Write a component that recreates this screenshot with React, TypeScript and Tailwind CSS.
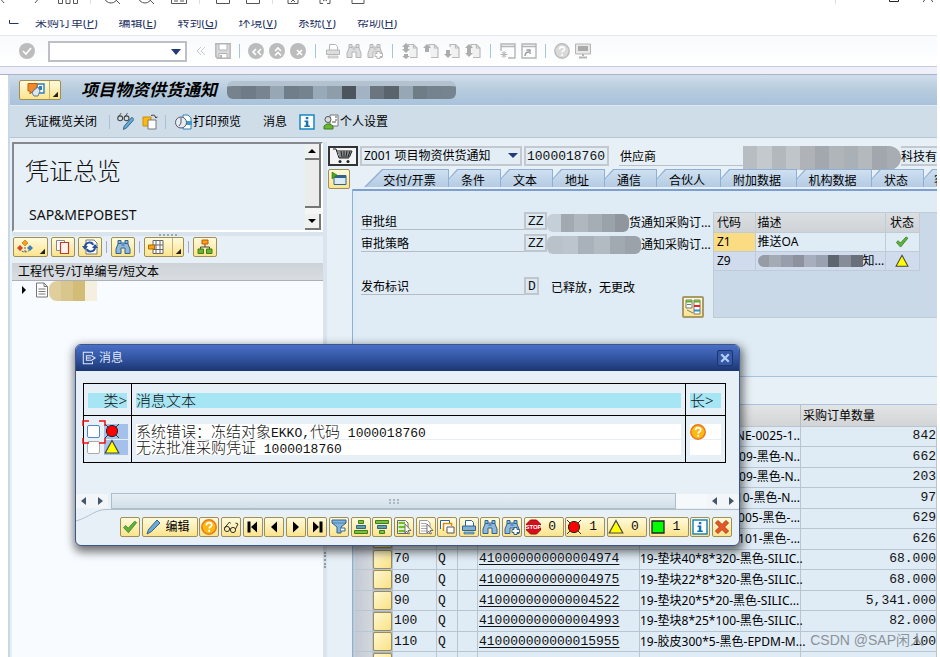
import React from "react";
import { clsx } from "clsx";

const MONO = "font-['Liberation_Mono','Noto_Sans_CJK_SC',monospace] text-[13px]";

const Svg = ({ children, className = "size-4", box = "0 0 16 16" }: { children: React.ReactNode, className?: string, box?: string }) => (
  <svg viewBox={box} className={clsx("shrink-0", className)} fill="none" aria-hidden="true">{children}</svg>
);

/* ---------- icons ---------- */

const Binoculars = ({ fill = "#8fb8dc", stroke = "#2f6391", plus = false }: { fill?: string, stroke?: string, plus?: boolean }) => (
  <Svg>
    <path d="M3 1.500h3v2.500h4V1.500h3V5l2 5v4.500h-5V9H6v5.500H1V10l2-5z" fill={fill} stroke={stroke} />
    <path d="M3 4.500h3M10 4.500h3M6.500 6h3" stroke={stroke} />
    {plus && <path d="M10 8.500h3v2h2.500v3H13v2h-3v-2H8v-3h2z" fill="#fff" stroke={stroke} />}
  </Svg>
);

const Question = () => (
  <Svg>
    <circle cx="8" cy="8" r="7.200" fill="#fdb913" stroke="#e8781e" strokeWidth="1.500" />
    <path d="M5.500 6.300c0-3.600 5.200-3.300 5.200-.4 0 1.800-2.500 1.700-2.500 3.600M8.200 10.800v1.900" stroke="#fff" strokeWidth="1.800" />
  </Svg>
);

const RedLight = () => (
  <Svg>
    <path d="M1 1l14 14M15 1L1 15" stroke="#333" />
    <circle cx="8" cy="8" r="5.600" fill="#f00" stroke="#222" />
  </Svg>
);

const Triangle = () => (
  <Svg><path d="M8 1.500l6.800 12.500H1.200z" fill="#ff0" stroke="#444" strokeWidth="1.200" /></Svg>
);

const Check = () => (
  <Svg><path d="M1.500 8.500l2.200-2 2.500 2.700 6.500-7 2 1.400-8.300 10.200z" fill="#5fb336" stroke="#3f8226" strokeWidth=".8" /></Svg>
);

const Info = ({ className = "size-4" }: { className?: string }) => (
  <Svg className={className}>
    <path d="M1 1h14v14H1z" fill="#fff" stroke="#1787c4" strokeWidth="1.500" />
    <path d="M6.800 3h2.500v2.200H6.800zM5.500 6.500h3.800v5h1.500V13H5.300v-1.500h1.500V8H5.500z" fill="#1573ad" />
  </Svg>
);

const Printer = ({ fill = "#7fb0d3", stroke = "#2f6391" }: { fill?: string, stroke?: string }) => (
  <Svg>
    <path d="M4.500 7V1.500h6l2 2V7" fill="#fff" stroke={stroke} />
    <path d="M1.500 7h13v4.500h-13z" fill={fill} stroke={stroke} />
    <path d="M3 13h10v2H3z" fill={fill} stroke={stroke} strokeWidth=".6" />
  </Svg>
);

const Glasses = () => (
  <Svg>
    <circle cx="4" cy="10" r="2.600" stroke="#333" />
    <circle cx="10" cy="11" r="2.600" stroke="#333" />
    <path d="M6.300 9.500l1.500.5M1.500 9l5-6 1 1.500M12.500 10l2.500-5-2.500-1" stroke="#333" />
  </Svg>
);

const GrayCircle = ({ d }: { d: string }) => (
  <Svg>
    <circle cx="8" cy="8" r="8" fill="#bcbcbc" />
    <path d={d} stroke="#fff" strokeWidth="1.600" />
  </Svg>
);

const GrayPage = ({ arrow }: { arrow: string }) => (
  <Svg>
    <path d="M6 4V1.500h5.500l3.500 3.500v9.500H8M11.500 1.500V5H15" fill="#f1f1f1" stroke="#b9b9b9" strokeWidth="1.200" />
    <path d={arrow} fill="#adadad" />
  </Svg>
);

const PlayerMark = ({ d }: { d: string }) => <Svg><path d={d} fill="#000" /></Svg>;

const ListMark = ({ green = false }: { green?: boolean }) => (
  <Svg>
    <path d="M1.500 1.500h8l2.500 2.500v10.500H1.500z" fill="#fff" stroke={green ? "#667" : "#999"} />
    {green
      ? <path d="M2.500 4h6.500M2.500 8h7M2.500 12h7" stroke="#6fbf1f" strokeWidth="2.500" />
      : <path d="M3 4.500h5.500M3 7h6.500M3 9.500h6M3 12h6" stroke="#aaa" />}
    <path d="M9 5l6 6.500h-3l1.500 3-1.500.5-1.300-3L9 14z" fill="#fff" stroke="#555" strokeWidth=".8" />
  </Svg>
);

/* ---------- small parts ---------- */

const Separator = ({ className = "mx-[9px]" }: { className?: string }) => (
  <span className={clsx("h-3.5 w-px shrink-0 bg-[#a9c3da]", className)} />
);

const YellowButton = ({ label, children, className = "w-6", menu = false }: { label: string, children: React.ReactNode, className?: string, menu?: boolean }) => (
  <button
    aria-label={label}
    className={clsx(
      "relative flex h-5 shrink-0 items-center justify-center gap-1 rounded-[2px] border border-[#a08f55] bg-linear-to-b from-[#fffadb] to-[#fbe48c]",
      className,
    )}
  >
    {children}
    {menu && <Svg className="absolute right-0.5 bottom-0.5 size-1.5"><path d="M16 2v14H2z" fill="#222" /></Svg>}
  </button>
);

const Mosaic = ({ cells, className }: { cells: string[], className: string }) => (
  <span className={clsx("flex shrink-0 overflow-hidden", className)}>
    {cells.map((cell, i) => <span key={i} className={clsx("flex-1", cell)} />)}
  </span>
);

/* ---------- top of the window ---------- */

const BrowserStrip = () => (
  <div className="flex h-5 items-start overflow-hidden text-[#555]">
    <Svg className="-mt-3 h-4 w-1.5" box="0 0 6 16"><path d="M-2 8l6 7M-2 8l6-7" stroke="currentColor" /></Svg>
    <Svg className="-mt-3 ml-7 h-4 w-2" box="0 0 8 16"><path d="M1 15l6-7-6-7" stroke="currentColor" /></Svg>
    <Svg className="-mt-3 ml-4 h-4 w-5" box="0 0 20 16"><path d="M.5 0v15.500h4V0M8 0v15.500h4V0M15.500 0v15.500h4V0" stroke="currentColor" /></Svg>
    <span className="ml-3 h-1 w-px bg-[#ddd]" />
    <Svg className="-mt-3 ml-3 h-4 w-4.5" box="0 0 18 16"><circle cx="8" cy="8" r="7" stroke="currentColor" /><path d="M13 12l4 4" stroke="currentColor" /></Svg>
    <Svg className="-mt-3 ml-4 h-4 w-4.5" box="0 0 18 16"><circle cx="8" cy="8" r="7" stroke="currentColor" /><path d="M13 12l4 4" stroke="currentColor" /></Svg>
    <Svg className="-mt-3 ml-4 size-4"><path d="M.5 0v15.500h15V0M3 13h4M9 13h4" stroke="currentColor" /></Svg>
    <span className="ml-3 h-1 w-px bg-[#ddd]" />
    <Svg className="-mt-3 ml-4 h-4 w-3.5" box="0 0 14 16"><path d="M.5 0v15.500h13V0" stroke="currentColor" /></Svg>
    <Svg className="-mt-3 ml-4 h-4 w-3.5" box="0 0 14 16"><path d="M.5 0v15.500h13V0M0 11.500h14" stroke="currentColor" /></Svg>
    <span className="ml-3 h-1 w-px bg-[#ddd]" />
    <Svg className="-mt-3 ml-3.5 h-4 w-3" box="0 0 12 16"><path d="M1 0v15.500h10V0M4 14l4-4M8 14l-4-4" stroke="currentColor" /></Svg>
    <Svg className="-mt-3 ml-5 h-4 w-3" box="0 0 12 16"><path d="M1 9v6.500h3M11 9v6.500H8M4 13l4-3M8 13l-4-3" stroke="currentColor" /></Svg>
    <Svg className="-mt-3 ml-5 h-4 w-3.5" box="0 0 14 16"><path d="M1 0v15.500h12V0" stroke="currentColor" /></Svg>
    <span className="ml-auto h-1 w-px bg-[#ddd]" />
    <Svg className="-mt-3.5 ml-[53px] h-4 w-2.5" box="0 0 10 16"><path d="M.5 0v15.500h9V0" stroke="#222" /></Svg>
    <Svg className="-mt-3.5 mr-1 ml-6 h-4 w-2.5" box="0 0 10 16"><path d="M0 16l5-6 5 6" stroke="#444" /></Svg>
  </div>
);

const menus = [
  { label: "采购订单", k: "P" },
  { label: "编辑", k: "E" },
  { label: "转到", k: "G" },
  { label: "环境", k: "V" },
  { label: "系统", k: "Y" },
  { label: "帮助", k: "H" },
];

const MenuBar = () => (
  <nav className="flex h-4 items-start overflow-hidden border-b border-[#e3e8ee] pl-[9px] text-[#1f3566]">
    <Svg className="-mt-[11px] mr-4 h-4 w-2.5" box="0 0 10 16"><path d="M.5 0v14.500h9" stroke="#1f3566" /></Svg>
    <div className="-mt-[5px] flex gap-[21px] leading-4">
      {menus.map((m) => (
        <button key={m.k} className="whitespace-nowrap">{m.label}(<u>{m.k}</u>)</button>
      ))}
    </div>
  </nav>
);

const CommandBar = () => (
  <div className="flex h-[31px] items-center border-b border-[#c5cddd] bg-linear-to-b from-[#f8fafc] to-white pl-[19px]">
    <button aria-label="确认"><GrayCircle d="M4 8l3 3 5-6" /></button>
    <div className="relative ml-[13px] flex w-[139px]">
      <input aria-label="命令" className="h-[21px] w-full border-2 border-[#bcbfc6] bg-white px-1" />
      <Svg className="absolute top-2 right-1.5 h-1.5 w-2.5" box="0 0 10 6"><path d="M0 0h10L5 6z" fill="#24397a" /></Svg>
    </div>
    <Svg className="ml-[9px] h-3 w-2.5" box="0 0 10 12"><path d="M5 2L1 6l4 4M9 2L5 6l4 4" stroke="#ccc" /></Svg>
    <Svg className="ml-[9px] size-4">
      <path d="M.8.800h14.400v14.400H2.500L.8 13.500z" fill="#d9d9d9" stroke="#b5b5b5" strokeWidth="1.400" />
      <path d="M4 1h8v6H4zM4 10.500h8V15H4z" fill="#fff" stroke="#b5b5b5" />
      <path d="M6 12v3" stroke="#b5b5b5" strokeWidth="2" />
    </Svg>
    <Separator className="mx-2" />
    <div className="flex gap-[5px]">
      <GrayCircle d="M8 6l-3 3 3 3M13 6l-3 3 3 3" />
      <GrayCircle d="M6 8l3-3 3 3M6 12.500l3-3 3 3" />
      <GrayCircle d="M7 7l5 5M12 7l-5 5" />
    </div>
    <Separator />
    <div className="flex gap-[5px]">
      <Printer fill="#ddd" stroke="#b5b5b5" />
      <Binoculars fill="#ddd" stroke="#b5b5b5" />
      <Binoculars fill="#ddd" stroke="#b5b5b5" plus />
    </div>
    <Separator />
    <div className="flex gap-[5px]">
      <GrayPage arrow="M4 0l4 4H6v2h2L4 10 0 6h2V4H0zM2 11h4v2h2l-4 3-4-3h2z" />
      <GrayPage arrow="M4 1l4 4H6v4H2V5H0z" />
      <GrayPage arrow="M2 7h4v4h2l-4 4-4-4h2z" />
      <GrayPage arrow="M4 1l4 4H6v5h2l-4 4-4-4h2V5H0z" />
    </div>
    <Separator />
    <div className="flex gap-[5px]">
      <Svg><path d="M1 8V1h14v14H8M1 3.500h14" stroke="#b5b5b5" strokeWidth="1.400" /><path d="M4 8v7M.5 11.500h7M2 9l4 5M6 9l-4 5" stroke="#b5b5b5" /></Svg>
      <Svg><path d="M1 1h14v14H1zM1 3.500h14" stroke="#b5b5b5" strokeWidth="1.400" /><path d="M4 13c0-3 1-4 4-4M5.500 7H9v4" stroke="#999" strokeWidth="1.400" /></Svg>
    </div>
    <Separator className="mx-2" />
    <div className="flex gap-[5px]">
      <Svg><circle cx="8" cy="8" r="7.200" fill="#dadada" stroke="#bbb" strokeWidth="1.400" /><path d="M5.500 6.500c0-3.500 5-3.300 5-.3C10.500 8 8 7.800 8 9.500M8 11v2" stroke="#fff" strokeWidth="1.600" /></Svg>
      <Svg><path d="M.5 1h15v10H.5z" fill="#e8e8e8" stroke="#b5b5b5" /><path d="M3 3h10v5H3z" fill="#aaa" /><path d="M8 11v2M4 14.500h8" stroke="#b5b5b5" strokeWidth="2" /></Svg>
    </div>
  </div>
);

const titleCells = [
  "bg-[#76838f]", "bg-[#6f7c88]", "bg-[#78848f]", "bg-[#98a7b4]", "bg-[#707e89]", "bg-[#75838e]", "bg-[#98a9b7]", "bg-[#8e9daa]",
  "bg-[#4c555d]", "bg-[#a3b3c3]", "bg-[#6b7580]", "bg-[#5a646d]", "bg-[#98a7b6]", "bg-[#6f7d87]", "bg-[#75838e]", "bg-[#76848f]",
];

const TitleBar = () => (
  <header className="flex h-[31px] items-center border-b border-[#dde8f1] bg-linear-to-b from-[#cfdeec] via-[#b6cbdc] to-[#a9c2dc] pl-[9px]">
    <YellowButton label="服务" className="w-[42px]" menu>
      <Svg className="mr-2 h-4 w-[18px]" box="0 0 18 16">
        <path d="M10 2h7v9h-7z" fill="#fff" stroke="#2d7fb8" strokeWidth="1.400" />
        <path d="M12 4h3v4h-3z" fill="#2d7fb8" />
        <path d="M1 1.500h9v3L6 9l-3 3V9H1z" fill="#f08a2a" stroke="#c05e10" />
        <path d="M7 8l4-3 2 4-2 5H7l-2-3z" fill="#dbe8f2" stroke="#5b7b95" />
      </Svg>
      <span className="absolute inset-y-0 right-2.5 w-px bg-[#c4b57a]" />
    </YellowButton>
    <h1 className="ml-5 text-[17px] leading-5 font-bold whitespace-nowrap text-black italic">项目物资供货通知</h1>
    <Mosaic className="ml-2.5 h-[18px] w-[229px] rounded-md border-t-[5px] border-[#b4c1cf]" cells={titleCells} />
  </header>
);

const AppToolbar = () => (
  <div className="flex h-8 items-center border-b border-[#b7c6d3] bg-[#cfdde8] pl-[15px] text-black">
    <button className="whitespace-nowrap">凭证概览关闭</button>
    <Separator className="mr-[7px] ml-3" />
    <button aria-label="显示/更改" className="flex">
      <Svg className="size-[17px]">
        <circle cx="3" cy="5" r="2.300" stroke="#444" /><circle cx="9" cy="5" r="2.300" stroke="#444" />
        <path d="M1 4l3-4M7 4l3-4" stroke="#444" strokeWidth=".8" />
        <path d="M14 4l2 2-7 8-3 1.500.7-3z" fill="#6aa8d4" stroke="#205a86" strokeWidth=".8" />
      </Svg>
    </button>
    <button aria-label="其他采购订单" className="ml-2 flex">
      <Svg><path d="M1 3h8v9H1z" fill="#fcb813" stroke="#d18d00" /><path d="M6 6h8v9H6z" fill="#fff" stroke="#777" /><path d="M9 1.500c3-1 5 0 5 2.500l1.500-1M14 4l-1.500-1.500" stroke="#444" /></Svg>
    </button>
    <Separator className="mr-[9px] ml-[7px]" />
    <button className="flex items-center whitespace-nowrap">
      <Svg className="h-4 w-[18px]" box="0 0 18 16">
        <path d="M8 1h5l3 3v11H8z" fill="#fff" stroke="#2d7fb8" />
        <path d="M11 7h6v4h-6z" fill="#3c9ccf" />
        <circle cx="6" cy="8.500" r="5.500" fill="#e4edf4" stroke="#556" />
        <path d="M6 4v5l-2 3" stroke="#556" />
      </Svg>
      打印预览
    </button>
    <button className="ml-[22px] whitespace-nowrap">消息</button>
    <button aria-label="帮助" className="ml-3 flex"><Info /></button>
    <button className="ml-2 flex items-center whitespace-nowrap">
      <Svg className="mr-px size-4">
        <path d="M7 1h8v11H7z" fill="#fff" stroke="#777" /><path d="M12 3h2M12 6h2M9 8h4" stroke="#555" />
        <circle cx="5" cy="5.500" r="3" fill="#ddd" stroke="#555" />
        <path d="M1 15v-3l3-2h3l3 2v3z" fill="#6cb52d" stroke="#3f7d1d" />
      </Svg>
      个人设置
    </button>
  </div>
);

/* ---------- left side ---------- */

const Overview = () => (
  <aside className="flex w-[311px] shrink-0 flex-col">
    <div className="flex h-[90px] border-2 border-[#868a8f] border-r-white border-b-white">
      <div className="flex-1 overflow-hidden pt-[11px] pl-[11px] text-[#111]">
        <h2 className="text-[24px] leading-8 font-light">凭证总览</h2>
        <p className="mt-5 pl-1 text-[14px] leading-4">SAP&amp;MEPOBEST</p>
      </div>
      <div className="flex w-4 flex-col bg-[#f6f6f6]">
        <button aria-label="向上" className="flex h-4 items-center justify-center border-r-2 border-b-2 border-[#777] bg-[#f0f0f0]"><Svg className="h-1 w-2" box="0 0 8 4"><path d="M4 0l4 4H0z" fill="#000" /></Svg></button>
        <span className="flex-1 border-r-2 border-b-2 border-[#777] bg-[#ececec]" />
        <button aria-label="向下" className="mt-1.5 flex h-4 items-center justify-center border-r-2 border-b-2 border-[#777] bg-[#f0f0f0]"><Svg className="h-1 w-2" box="0 0 8 4"><path d="M0 0h8L4 4z" fill="#000" /></Svg></button>
      </div>
    </div>
    <div className="flex h-1 items-end justify-center bg-[#d9e4ec]"><span className="w-[18px] border-b-2 border-dotted border-[#9aa8b4]" /></div>
    <div className="flex h-[22px] items-center gap-[3px] pl-px">
      <YellowButton label="选择变式" className="w-[35px] pr-3" menu>
        <Svg>
          <path d="M3 10c1 4 9 4 10 0M8 8v6" stroke="#567" strokeDasharray="2 1" />
          <path d="M8 1l3 3-3 3-3-3z" fill="#f9a11b" stroke="#b46b00" strokeWidth=".6" />
          <path d="M3 6l3 3-3 3-3-3z" fill="#d8452c" /><path d="M13 6l3 3-3 3-3-3z" fill="#3b80bd" />
        </Svg>
      </YellowButton>
      <YellowButton label="复制"><Svg><path d="M1.500 1.500h8v10h-8z" fill="#fff" stroke="#888" /><path d="M5.500 3.500h8v11h-8z" fill="#fff3ee" stroke="#c0392b" strokeWidth="1.200" /></Svg></YellowButton>
      <YellowButton label="刷新">
        <Svg><path d="M4 1h8l3 3v11H4z" fill="#fff" stroke="#777" /><path d="M3 8c0-5 7-6 8-2M13 8c0 5-7 6-8 2" stroke="#2350a0" strokeWidth="2" /><path d="M0 7h6L3 11zM10 9h6l-3-4z" fill="#2350a0" /></Svg>
      </YellowButton>
      <span className="mx-px h-3 w-px bg-[#aab]" />
      <YellowButton label="查找"><Binoculars /></YellowButton>
      <span className="mx-px h-3 w-px bg-[#aab]" />
      <YellowButton label="布局" className="w-10 pr-4" menu>
        <Svg><path d="M5 1.500h10v13H5zM8 1v14M12 1v14M5 6h10M5 10.500h10" fill="#fff" stroke="#666" /><path d="M.5 6h6v4h-6z" fill="#fca311" stroke="#b46b00" /></Svg>
        <span className="absolute inset-y-0 right-2.5 w-px bg-[#c4b57a]" />
      </YellowButton>
      <span className="mx-px h-3 w-px bg-[#aab]" />
      <YellowButton label="层次">
        <Svg><path d="M8 5v3M3.500 10V8h9v2" stroke="#444" /><path d="M5 1h6v4H5z" fill="#fca311" stroke="#c0551b" /><path d="M1 10h5.500v4.500H1zM9.500 10H15v4.500H9.500z" fill="#69b32d" stroke="#3f7d1d" /></Svg>
      </YellowButton>
    </div>
    <div className="mt-[5px] h-[18px] border-b border-[#a9b0b6] bg-linear-to-b from-[#cdd3d8] to-[#d9dde1] pl-1.5 leading-[18px] text-black">工程代号/订单编号/短文本</div>
    <div className="flex flex-1 items-start bg-[#f8fbff]">
      <button aria-label="展开" className="mt-[5px] ml-2.5"><Svg className="h-2 w-1" box="0 0 4 8"><path d="M0 0l4 4-4 4z" fill="#000" /></Svg></button>
      <Svg className="mt-px ml-2.5 h-4 w-3" box="0 0 12 16"><path d="M.5 1h7.500l3.500 3.500V15H.5zM8 1v3.500h3.500M2.500 7h7M2.500 9.500h7M2.500 12h7" fill="#fff" stroke="#777" /></Svg>
      <Mosaic className="ml-px h-5 w-12 rounded-l-lg" cells={["bg-[#e0cf9c]", "bg-[#d9c68c]", "bg-[#d3bc76]", "bg-[#f4efdf]"]} />
    </div>
  </aside>
);

/* ---------- right side ---------- */

const tabs = [
  { label: "交付/开票", width: "w-[85px] pl-1.5" },
  { label: "条件", width: "w-[52px] pr-1" },
  { label: "文本", width: "w-[52px] pr-1" },
  { label: "地址", width: "w-[52px] pr-1" },
  { label: "通信", width: "w-[52px] pr-1" },
  { label: "合伙人", width: "w-[64px] pr-1" },
  { label: "附加数据", width: "w-[76px] pr-1" },
  { label: "机构数据", width: "w-[75px] pr-1" },
  { label: "状态", width: "w-[52px] pr-1" },
  { label: "客户数据", width: "w-[76px] pl-2.5 text-left" },
];

const Tabs = () => (
  <div role="tablist" className="flex h-[18px] flex-1 overflow-hidden pl-3">
    {tabs.map((tab, i) => (
      <button
        key={tab.label}
        role="tab"
        className={clsx(
          "relative shrink-0 bg-[#8fb0d6] whitespace-nowrap text-black",
          i === 0 ? "[clip-path:polygon(0_100%,18px_0,100%_0,100%_100%)]" : "[clip-path:polygon(0_50%,8px_0,100%_0,100%_100%,0_100%)]",
          tab.width,
        )}
      >
        <span
          className={clsx(
            "absolute inset-0 mt-px mr-px bg-linear-to-b from-[#cfe0f0] to-[#b4cbe3]",
            i === 0 ? "[clip-path:polygon(2px_100%,19px_0,100%_0,100%_100%)]" : "[clip-path:polygon(0_55%,9px_0,100%_0,100%_100%,0_100%)]",
          )}
        />
        <span className="relative block pt-1 leading-4">{tab.label}</span>
      </button>
    ))}
  </div>
);

const DocumentHeader = () => (
  <div className="flex pt-1">
    <button aria-label="采购订单" className="flex h-5 w-[30px] items-center justify-center border-2 border-[#333] bg-[#f2f4f6]">
      <Svg className="h-4 w-5" box="0 0 20 16"><path d="M0 1h3l3 9h10M3.500 3H19l-2.500 6H6M5 5h13M6 7h11M8 3l1 6M11 3v6M14 3l-1 6M17 3l-2 6" stroke="#222" /><circle cx="7" cy="13.500" r="1.500" fill="#222" /><circle cx="15" cy="13.500" r="1.500" fill="#222" /></Svg>
    </button>
    <div className="relative ml-0.5 flex w-[162px]">
      <select aria-label="订单类型" className="h-5 w-full appearance-none border-2 border-[#c3c9cf] bg-[#e3edf5] pl-0.5 text-black">
        <option>Z001 项目物资供货通知</option>
      </select>
      <Svg className="pointer-events-none absolute top-[7px] right-1 h-[5px] w-2.5" box="0 0 10 5"><path d="M0 0h10L5 5z" fill="#24397a" /></Svg>
    </div>
    <input aria-label="凭证编号" readOnly value="1000018760" className={clsx(MONO, "ml-0.5 h-5 w-[85px] border-2 border-[#c3c9cf] bg-[#e3edf5] px-px text-[#111]")} />
    <label htmlFor="vendor" className="ml-2.5 h-5 w-[124px] border-b border-[#b9c1c8] pl-px leading-[22px] text-black">供应商</label>
    <Mosaic
      className="h-6 w-[158px] rounded-r-xl -mb-1"
      cells={["bg-[#b7bdc3]", "bg-[#c4c9cd]", "bg-[#b3b8bd]", "bg-[#c0c5ca]", "bg-[#afb2b6]", "bg-[#a2a8ae]", "bg-[#b0b5ba]", "bg-[#a9b0b6]", "bg-[#b4b9be]", "bg-[#a1a7ad]", "bg-[#a8adb3]"]}
    />
    <input id="vendor" readOnly value="科技有限公司" className="h-5 min-w-0 flex-1 border-y-2 border-[#c3c9cf] bg-[#e3edf5] text-black" />
  </div>
);

const ReleaseRow = ({ label, code, cells, width, text }: { label: string, code: string, cells?: string[], width?: string, text: string }) => (
  <div className="flex h-[18px] text-black">
    <span className="w-[163px] shrink-0 border-b border-[#b5bcc3] leading-5">{label}</span>
    <span className={clsx(MONO, "shrink-0 border-2 border-[#c0c6cc] bg-[#dce8f2] px-0.5 leading-4 text-[#111]", cells ? "w-[23px]" : "w-[15px]")}>{code}</span>
    {cells && <Mosaic className={clsx("mt-0.5 h-[18px] rounded-md", width)} cells={cells} />}
    <span className={clsx("leading-[22px] whitespace-nowrap", !cells && "ml-3")}>{text}</span>
  </div>
);

const ReleasePanel = () => (
  <div className="flex h-[187px] border-t-2 border-[#7c9fce] bg-[#dfebf5] pt-[21px] pl-2">
    <div className="flex w-[352px] shrink-0 flex-col">
      <ReleaseRow label="审批组" code="ZZ" width="w-[82px]" cells={["bg-[#c5cfd8]", "bg-[#a3a9b0]", "bg-[#b0b7be]", "bg-[#a5adb5]", "bg-[#9aa2aa]", "bg-[#8f969d]"]} text="货通知采购订..." />
      <div className="h-1" />
      <ReleaseRow label="审批策略" code="ZZ" width="w-[94px]" cells={["bg-[#b9c2cb]", "bg-[#bcc5cd]", "bg-[#a9b2ba]", "bg-[#b2bac2]", "bg-[#a1a9b1]", "bg-[#9ba2a9]"]} text="通知采购订..." />
      <div className="h-[25px]" />
      <ReleaseRow label="发布标识" code="D" text="已释放，无更改" />
      <button aria-label="释放策略" className="mt-px mr-[9px] flex size-[22px] items-center justify-center self-end rounded-[2px] border-2 border-[#a79a66] bg-linear-to-b from-[#fffadb] to-[#fbe48c]">
        <Svg><path d="M1 1h6v8H1zM9 1h6v14H9z" fill="#fff" stroke="#777" /><path d="M1 2.500h6M9 2.500h6" stroke="#5fae1b" strokeWidth="2" /><path d="M9 7h6" stroke="#e22" strokeWidth="2" /><path d="M9 11.500h6" stroke="#2c8fd0" strokeWidth="2" /><path d="M2 5.500h4M2 11l6 3" stroke="#777" /></Svg>
      </button>
    </div>
    <div className="h-[106px] flex-1 border border-r-0 border-[#bfcbd6] bg-[#c9d9e8]">
      <table className="table-fixed border-collapse text-left text-black">
        <thead className="h-[19px] bg-linear-to-b from-[#dcdfe1] to-[#cfd3d7]">
          <tr>
            <th className="w-[41px] border border-t-0 border-l-0 border-[#bfcbd6] pt-0.5 pl-[3px] font-normal">代码</th>
            <th className="w-[130px] border border-t-0 border-[#bfcbd6] pt-0.5 pl-0.5 font-normal">描述</th>
            <th className="w-[34px] border border-t-0 border-[#bfcbd6] pt-0.5 text-center font-normal">状态</th>
          </tr>
        </thead>
        <tbody>
          <tr className="h-[19px] bg-[#dfebf5]">
            <td className="border border-l-0 border-[#bfcbd6] bg-[#fcdc82] pl-[3px] leading-4">Z1</td>
            <td className="border border-[#bfcbd6] pl-0.5 leading-4">推送OA</td>
            <td className="border border-[#bfcbd6]"><Svg className="mx-auto size-3.5"><path d="M1.500 8.500l2.200-2 2.500 2.700 6.500-7 2 1.400-8.300 10.200z" fill="#5fb336" stroke="#3f8226" /></Svg></td>
          </tr>
          <tr className="h-[19px] bg-[#d0dcee]">
            <td className="border border-l-0 border-[#bfcbd6] pl-[3px] leading-4">Z9</td>
            <td className="border border-[#bfcbd6] pl-0.5 leading-4">
              <span className="flex items-center"><Mosaic className="h-3 w-[105px] rounded-l-md" cells={["bg-[#969ca6]", "bg-[#a5abb5]", "bg-[#989eab]", "bg-[#8d929e]", "bg-[#a7aebd]", "bg-[#9aa2b2]", "bg-[#5f656f]", "bg-[#868d99]", "bg-[#6a707b]"]} />知...</span>
            </td>
            <td className="border border-[#bfcbd6]"><Svg className="mx-auto size-3.5"><path d="M8 1.500l6.800 12.500H1.200z" fill="#ff0" stroke="#444" strokeWidth="1.200" /></Svg></td>
          </tr>
        </tbody>
      </table>
    </div>
  </div>
);

// the first rows lie under the message dialog
const items = [
  { text: "NE-0025-1..", qty: "842" },
  { text: "09-黑色-N..", qty: "662" },
  { text: "09-黑色-N..", qty: "203" },
  { text: "10-黑色-N...", qty: "97" },
  { text: "005-黑色-...", qty: "629" },
  { text: "101-黑色-...", qty: "626" },
  { no: "70", material: "410000000000004974", text: "19-垫块40*8*320-黑色-SILIC..", qty: "68.000" },
  { no: "80", material: "410000000000004975", text: "19-垫块22*8*320-黑色-SILIC..", qty: "68.000" },
  { no: "90", material: "410000000000004522", text: "19-垫块20*5*20-黑色-SILIC...", qty: "5,341.000" },
  { no: "100", material: "410000000000004993", text: "19-垫块8*25*100-黑色-SILIC..", qty: "82.000" },
  { no: "110", material: "410000000000015955", text: "19-胶皮300*5-黑色-EPDM-M...", qty: "100" },
  {},
] as { no?: string, material?: string, text?: string, qty?: string }[];

const ItemTable = () => (
  <table className="h-[268px] w-full table-fixed border-collapse bg-[#dfebf5] text-left text-black">
    <colgroup>
      <col className="w-[19px]" />
      <col className="w-[20px]" />
      <col className="w-[44px]" />
      <col className="w-[21px]" />
      <col className="w-[20px]" />
      <col className="w-[162px]" />
      <col className="w-[161px]" />
      <col />
    </colgroup>
    <thead>
      <tr className="h-[21px] bg-linear-to-b from-[#e2e4e6] to-[#d2d4d6]">
        <th colSpan={7} />
        <th className="border-l border-[#b4bfca] pt-0.5 pl-0.5 font-normal">采购订单数量</th>
      </tr>
    </thead>
    <tbody>
      {items.map((item, i) => (
        <tr key={i}>
          <td className="border border-[#b9c5d1] bg-linear-to-r from-[#c3c9d3] to-[#d3d8df] p-0" />
          <td className="border border-[#b9c5d1] bg-[#aab3bf] p-0">
            <button aria-label="选择项目" className="block h-[19px] w-full rounded-[2px] border border-[#9a8c5a] bg-linear-to-br from-[#fff7d0] to-[#f9e283]" />
          </td>
          <td className={clsx(MONO, "border border-l-0 border-[#b9c5d1] p-0 pl-px text-[#111]")}>{item.no}</td>
          <td className={clsx(MONO, "border border-[#b9c5d1] p-0 pl-px text-[#111]")}>{item.no && "Q"}</td>
          <td className="border border-[#b9c5d1] p-0" />
          <td className={clsx(MONO, "border border-[#b9c5d1] p-0 pl-px text-[#111]")}>
            {item.material && <a href="#" className="underline underline-offset-2">{item.material}</a>}
          </td>
          <td className={clsx("border border-[#b9c5d1] p-0 whitespace-nowrap", item.no ? "tracking-normal" : "text-right")}>{item.text}</td>
          <td className={clsx(MONO, "border border-[#b9c5d1] p-0 text-right text-[#111]")}>{item.qty}</td>
        </tr>
      ))}
    </tbody>
  </table>
);

/* ---------- message dialog ---------- */

const Arrow = ({ d, label }: { d: string, label: string }) => (
  <button aria-label={label} className="flex h-3.5 w-4 items-center justify-center bg-[#f3f6f9]">
    <Svg className="h-2 w-1.5" box="0 0 6 8"><path d={d} fill="#46566a" /></Svg>
  </button>
);

const LEFT = "M5 0v8L0 4z";
const RIGHT = "M1 0v8l5-4z";

const CountButton = ({ label, count, children }: { label: string, count: number, children: React.ReactNode }) => (
  <YellowButton label={label} className="w-10">
    {children}
    <span className={clsx(MONO, "flex-1 pr-1 text-center text-[#111]")}>{count}</span>
  </YellowButton>
);

const DialogTable = () => (
  <table className="w-full table-fixed border-collapse border border-black text-left text-[#111]">
    <colgroup>
      <col className="w-[48px]" />
      <col />
      <col className="w-[40px]" />
    </colgroup>
    <thead>
      <tr className="h-8">
        <th className="border border-black p-0 px-1 pt-0.5 font-light"><span className="block bg-[#a6e5f3] text-right text-[15px] leading-[15px]">类&gt;</span></th>
        <th className="border border-black p-0 px-1 pt-0.5 font-light"><span className="block bg-[#a6e5f3] text-[15px] leading-[15px]">消息文本</span></th>
        <th className="border border-black p-0 px-1 pt-0.5 font-light"><span className="block bg-[#a6e5f3] text-[15px] leading-[15px]">长&gt;</span></th>
      </tr>
    </thead>
    <tbody>
      <tr className="h-[47px]">
        <td className="relative border border-black p-0 pl-[3px]">
          <span className="absolute top-1 -left-0.5 size-6">
            <Svg className="size-6" box="0 0 24 24"><path d="M1 6V1h6M17 1h6v5M1 18v5h6M17 23h6v-5" stroke="#e11" strokeWidth="1.500" /></Svg>
          </span>
          <div className="flex h-[15px] items-center">
            <input type="checkbox" aria-label="选择消息 1" className="size-[13px] appearance-none rounded-[2px] border border-[#4f86c6] bg-white" />
            <span className="ml-1 flex h-full w-6 items-center bg-[#a3c1ea]"><RedLight /></span>
          </div>
          <div className="mt-px flex h-[15px] items-center">
            <input type="checkbox" aria-label="选择消息 2" className="size-[13px] appearance-none rounded-[2px] border border-[#aaa] bg-white" />
            <span className="ml-1 flex h-full w-6 items-center bg-[#a3c1ea]"><Triangle /></span>
          </div>
        </td>
        <td className="border border-black p-0 px-1 font-light">
          <p className="h-[15px] bg-white text-[15px] leading-[15px] whitespace-pre">
            系统错误：冻结对象<span className={MONO}>EKKO,</span>代码<span className={MONO}> 1000018760</span>
          </p>
          <p className="mt-px h-[15px] bg-white text-[15px] leading-[15px] whitespace-pre">
            无法批准采购凭证<span className={MONO}> 1000018760</span>
          </p>
        </td>
        <td className="border border-black p-0 px-1">
          <div className="h-[15px] bg-white"><Question /></div>
          <div className="mt-px h-[15px] bg-white" />
        </td>
      </tr>
    </tbody>
  </table>
);

const MessageDialog = () => (
  <section
    role="dialog"
    aria-label="消息"
    className="absolute top-[344px] left-[75px] w-[665px] overflow-hidden rounded-md border border-[#3c5689] bg-[#e8f0f7] shadow-[1px_4px_10px_2px_rgba(0,0,0,0.55)]"
  >
    <div className="flex h-[26px] items-center bg-linear-to-b from-[#4a6fc6] via-[#3355a2] to-[#1b3672] pr-1.5 pl-[5px] text-[#dfe8fb]">
      <Svg className="h-3.5 w-4"><path d="M12 4V1.500H1.500v13H12V12M5 5.500h6l4 2.500-4 2.500H5zM5 8h5" stroke="#dfe8fb" strokeWidth="1.200" /></Svg>
      <span className="ml-0.5">消息</span>
      <button aria-label="关闭" className="ml-auto flex size-4 items-center justify-center rounded-[2px] border border-[#1c3470] bg-[#3658a4]">
        <Svg className="size-2.5"><path d="M2 2l12 12M14 2L2 14" stroke="#b5cdf8" strokeWidth="3.500" /></Svg>
      </button>
    </div>
    <div className="pt-3 pr-[13px] pl-[7px]"><DialogTable /></div>
    <div className="mt-[30px] flex items-center">
      <Arrow d={LEFT} label="左" />
      <Arrow d={RIGHT} label="右" />
      <div className="ml-[3px] flex h-4 w-[565px] items-center justify-center border border-[#adbecb] bg-linear-to-b from-[#e6eef4] to-[#d3dfe8]">
        <span className="w-2.5 border-y-2 border-dotted border-[#a9b8c4] pt-px" />
      </div>
      <div className="h-3.5 flex-1 bg-[#f6f9fb]" />
      <Arrow d={LEFT} label="左移" />
      <Arrow d={RIGHT} label="右移" />
    </div>
    <div className="flex h-9 items-start">
      <Svg className="h-3.5 w-[43px]" box="0 0 43 14"><path d="M0 12C14 8 18 1 30 .5h13" stroke="#b3c0cb" /></Svg>
      <div className="flex flex-1 justify-between border-t border-[#b3c0cb] pt-[7px] pr-[7px] pl-px">
        <YellowButton label="继续" className="w-5"><Check /></YellowButton>
        <YellowButton label="编辑" className="w-14 pr-1">
          <Svg><path d="M11 1l3 3-8.500 8.500L1 15l1.500-4.500z" fill="#6ea9d6" stroke="#2f6391" /></Svg>
          <span className="text-black">编辑</span>
        </YellowButton>
        <YellowButton label="帮助" className="w-5"><Question /></YellowButton>
        <YellowButton label="详细信息" className="w-5"><Glasses /></YellowButton>
        <YellowButton label="第一个" className="w-5"><PlayerMark d="M2.500 2.500h3v11h-3zM12 2.500v11L6 8z" /></YellowButton>
        <YellowButton label="上一个" className="w-5"><PlayerMark d="M11 2.500v11L5 8z" /></YellowButton>
        <YellowButton label="下一个" className="w-5"><PlayerMark d="M5 2.500v11L11 8z" /></YellowButton>
        <YellowButton label="最后一个" className="w-5"><PlayerMark d="M4 2.500v11L10 8zM10.500 2.500h3v11h-3z" /></YellowButton>
        <YellowButton label="过滤" className="w-5"><Svg><path d="M1 1h14v3l-5 4v6H6V8L1 4z" fill="#7fb4dd" stroke="#2f6391" /><path d="M1 4h14" stroke="#2f6391" strokeWidth=".6" /><path d="M10 9h4v3h-4" fill="#fff" stroke="#2f6391" /></Svg></YellowButton>
        <YellowButton label="升序" className="w-5"><Svg><path d="M5.500 1.500h5v3h-5z" fill="#7cbf3b" stroke="#3f7d1d" /><path d="M3.500 6.500h9v3h-9z" fill="#5fa0a8" stroke="#2f6391" /><path d="M1.500 11.500h13v3h-13z" fill="#7cbf3b" stroke="#3f7d1d" /></Svg></YellowButton>
        <YellowButton label="降序" className="w-5"><Svg><path d="M1.500 1.500h13v3h-13z" fill="#7cbf3b" stroke="#3f7d1d" /><path d="M3.500 6.500h9v3h-9z" fill="#5fa0a8" stroke="#2f6391" /><path d="M5.500 11.500h5v3h-5z" fill="#7cbf3b" stroke="#3f7d1d" /></Svg></YellowButton>
        <YellowButton label="全选" className="w-5"><ListMark green /></YellowButton>
        <YellowButton label="取消全选" className="w-5"><ListMark /></YellowButton>
        <YellowButton label="选择块" className="w-5"><Svg><path d="M1.500 10V1.500h9V4" fill="#fff" stroke="#2f6391" /><path d="M4.500 12V4.500h8V7" fill="#fff" stroke="#e08a00" strokeWidth="1.500" /><path d="M8 8h7v6H8z" fill="#fff" stroke="#555" /></Svg></YellowButton>
        <YellowButton label="打印" className="w-5"><Printer /></YellowButton>
        <YellowButton label="查找" className="w-5"><Binoculars /></YellowButton>
        <YellowButton label="查找下一个" className="w-5"><Binoculars plus /></YellowButton>
        <CountButton label="终止" count={0}>
          <Svg className="h-4 w-[17px]">
            <path d="M5 1h6l4 4v6l-4 4H5l-4-4V5z" fill="#d3101c" stroke="#9b0b14" />
            <text x="8" y="10.300" textAnchor="middle" fontSize="6" fontWeight="700" fontFamily="Liberation Sans" fill="#fff">STOP</text>
          </Svg>
        </CountButton>
        <CountButton label="错误" count={1}><RedLight /></CountButton>
        <CountButton label="警告" count={0}><Triangle /></CountButton>
        <CountButton label="成功" count={1}><Svg><path d="M2 2h12v12H2z" fill="#0f0" stroke="#222" strokeWidth="1.300" /></Svg></CountButton>
        <YellowButton label="信息" className="w-5"><Info /></YellowButton>
        <YellowButton label="取消" className="w-5"><Svg><path d="M4 1.500l4 4 4-4L14.500 4l-4 4 4 4-2.500 2.500-4-4-4 4L1.500 12l4-4-4-4z" fill="#e4572a" stroke="#b23a14" /></Svg></YellowButton>
      </div>
    </div>
  </section>
);

export default function App() {
  return (
    <div className="relative flex h-screen flex-col overflow-hidden bg-white pr-[3px] font-['Noto_Sans','Noto_Sans_CJK_SC',sans-serif] text-[12px] leading-4">
      <BrowserStrip />
      <MenuBar />
      <CommandBar />
      <div className="h-2 border-b border-[#a9b4c6] bg-[#eeeff8]" />
      <div className="ml-2 flex min-h-0 flex-1 flex-col border-l-2 border-[#c9d8e6] bg-[#e8f0f7]">
        <TitleBar />
        <AppToolbar />
        <div className="flex min-h-0 flex-1 pt-1 pl-0.5">
          <Overview />
          <div className="flex w-1 flex-col items-center bg-[#d9e4ec]"><span className="mt-[410px] h-4 border-l-2 border-dotted border-[#8f9ba6]" /></div>
          <main className="min-w-0 flex-1 pl-px">
            <DocumentHeader />
            <div className="mt-[3px] flex">
              <div className="w-6 shrink-0">
                <YellowButton label="折叠抬头" className="w-[22px]">
                  <Svg><path d="M3 4.500h12v9H3z" fill="#dceaf5" stroke="#2f6391" /><path d="M3 6h12" stroke="#2f6391" strokeWidth="2" /><path d="M1 1l5 3-5 4z" fill="#4ca321" stroke="#2f7413" strokeWidth=".6" /></Svg>
                </YellowButton>
              </div>
              <Tabs />
            </div>
            <div className="ml-6 border-l border-[#8fb0d6]">
              <ReleasePanel />
              <div className="h-[29px] border-y border-[#a9c3de] bg-[#e8f0f7]" />
              <ItemTable />
            </div>
          </main>
        </div>
      </div>
      <MessageDialog />
      <span className="absolute right-[16px] bottom-[9px] font-['Liberation_Sans','Noto_Sans_CJK_SC',sans-serif] text-[14px] text-[#8c9299]">CSDN @SAP闲人</span>
    </div>
  );
}
